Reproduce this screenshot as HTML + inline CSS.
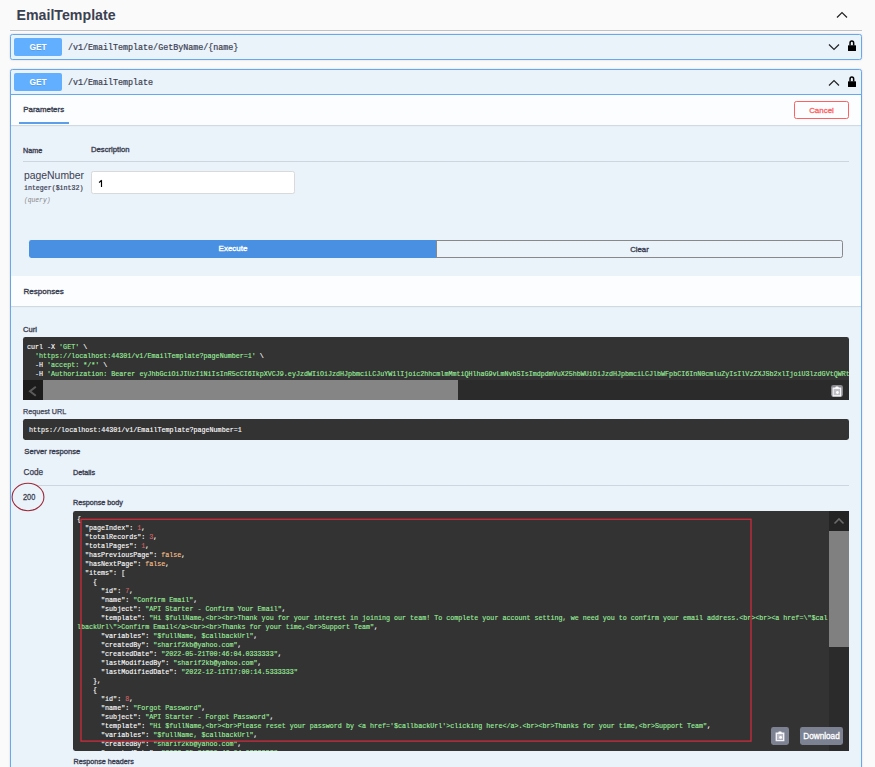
<!DOCTYPE html>
<html><head><meta charset="utf-8">
<style>
*{margin:0;padding:0;box-sizing:border-box}
html,body{width:875px;height:767px;overflow:hidden;background:#fafafa}
body{position:relative;font-family:"Liberation Sans",sans-serif;color:#3b4151}
.a{position:absolute;white-space:pre}
.sans{font-family:"Liberation Sans",sans-serif}
.mono{font-family:"Liberation Mono",monospace}
.opb{position:absolute;left:10px;width:852px;border:1px solid #66a8ee;border-radius:2.4px;background:rgba(97,175,254,.1);box-shadow:0 0 2px rgba(0,0,0,.19)}
.badge{position:absolute;left:14px;width:48px;height:18px;background:#61affe;border-radius:2px;color:#fff;font:bold 8.4px/18px "Liberation Sans",sans-serif;text-align:center;text-shadow:0 1px 0 rgba(0,0,0,.1)}
.path{font:8.35px/10px "Liberation Mono",monospace;color:#3b4151;-webkit-text-stroke:0.2px #3b4151;transform:scaleY(1.1);transform-origin:0 0}
.dark{position:absolute;background:#333;border-radius:2.4px;overflow:hidden}
.code{font:6.7px/9px "Liberation Mono",monospace;color:#fff;white-space:pre;-webkit-text-stroke:0.12px currentColor}
.s{color:#9cf09c}.n{color:#d36363}.l{color:#fcc28c}
.lbl{font:7.2px/9px "Liberation Sans",sans-serif;color:#3b4151;-webkit-text-stroke:0.35px #3b4151}
</style></head><body>

<!-- heading -->
<div class="a" style="left:16.5px;top:5px;font:bold 14.2px/20px 'Liberation Sans',sans-serif;color:#3b4151">EmailTemplate</div>
<div class="a" style="left:10px;top:30px;width:852px;height:1px;background:rgba(59,65,81,.3)"></div>
<svg class="a" style="left:836px;top:10px" width="12" height="9" viewBox="0 0 12 9"><path d="M1 7.5 L6 2.5 L11 7.5" fill="none" stroke="#222" stroke-width="1.2"/></svg>

<!-- opblock 1 -->
<div class="opb" style="top:34px;height:26px"></div>
<div class="badge" style="top:38px">GET</div>
<div class="a path" style="left:68px;top:42.3px">/v1/EmailTemplate/GetByName/{name}</div>
<svg class="a" style="left:828px;top:42px" width="12" height="10" viewBox="0 0 12 10"><path d="M1 2.5 L6 7.5 L11 2.5" fill="none" stroke="#222" stroke-width="1.2"/></svg>
<svg class="a" style="left:847px;top:40px" width="10" height="12" viewBox="0 0 10 12"><path d="M3.05 5.6 V2.9 A1.8 1.8 0 0 1 6.65 2.9 V5.6" fill="none" stroke="#000" stroke-width="1.5"/><rect x="1" y="5.3" width="8" height="5.6" rx="0.5" fill="#000"/></svg>

<!-- opblock 2 -->
<div class="opb" style="top:69px;height:720px"></div>
<div class="a" style="left:11px;top:94px;width:850px;height:1px;background:#66a8ee"></div>
<div class="badge" style="top:73px">GET</div>
<div class="a path" style="left:68px;top:77.3px">/v1/EmailTemplate</div>
<svg class="a" style="left:828px;top:77.6px" width="12" height="10" viewBox="0 0 12 10"><path d="M1 7.5 L6 2.5 L11 7.5" fill="none" stroke="#222" stroke-width="1.2"/></svg>
<svg class="a" style="left:847px;top:75.6px" width="10" height="12" viewBox="0 0 10 12"><path d="M3.05 5.6 V2.9 A1.8 1.8 0 0 1 6.65 2.9 V5.6" fill="none" stroke="#000" stroke-width="1.5"/><rect x="1" y="5.3" width="8" height="5.6" rx="0.5" fill="#000"/></svg>

<!-- tab header -->
<div class="a" style="left:11px;top:95px;width:850px;height:30px;background:rgba(255,255,255,.8);box-shadow:0 1px 1px rgba(0,0,0,.1)"></div>
<div class="a" style="left:23.3px;top:105.4px;font:7.9px/10px 'Liberation Sans',sans-serif;-webkit-text-stroke:0.35px #3b4151">Parameters</div>
<div class="a" style="left:19px;top:122px;width:50px;height:2px;background:#5c9fe8"></div>
<div class="a" style="left:794px;top:101px;width:55px;height:18px;border:1.2px solid #ff6060;border-radius:2.4px;color:#ff6060;font:7.95px/17.4px 'Liberation Sans',sans-serif;-webkit-text-stroke:0.3px #ff6060;text-align:center">Cancel</div>

<!-- params table -->
<div class="a lbl" style="left:23px;top:145.5px">Name</div>
<div class="a lbl" style="left:91px;top:145.3px;font-size:7.7px">Description</div>
<div class="a" style="left:23px;top:161px;width:826px;height:1px;background:rgba(59,65,81,.16)"></div>
<div class="a" style="left:24px;top:169.5px;font:10.4px/12px 'Liberation Sans',sans-serif">pageNumber</div>
<div class="a mono" style="left:24px;top:183.5px;font:6.6px/9px 'Liberation Mono',monospace;-webkit-text-stroke:0.2px #3b4151">integer($int32)</div>
<div class="a mono" style="left:24px;top:196px;font:italic 6.3px/9px 'Liberation Mono',monospace;color:#888">(query)</div>
<div class="a" style="left:91px;top:171px;width:204px;height:23px;background:#fff;border:1px solid #d9d9d9;border-radius:2.4px"></div>
<svg class="a" style="left:97px;top:178px" width="8" height="11" viewBox="0 0 8 11"><path d="M4.5 9 V2.3 M4.6 2.2 C3.8 3.3 3 4 2 4.5" fill="none" stroke="#000" stroke-width="1.15"/></svg>

<!-- execute / clear -->
<div class="a" style="left:29px;top:240px;width:408px;height:18px;background:#4990e2;border-radius:2.4px 0 0 2.4px;color:#fff;font:8px/18.4px 'Liberation Sans',sans-serif;-webkit-text-stroke:0.35px #fff;text-align:center">Execute</div>
<div class="a" style="left:436px;top:240px;width:407px;height:18px;border:1.2px solid #888;border-radius:0 2.4px 2.4px 0;color:#3b4151;font:7.75px/17.4px 'Liberation Sans',sans-serif;-webkit-text-stroke:0.35px #3b4151;text-align:center">Clear</div>

<!-- responses header -->
<div class="a" style="left:11px;top:276px;width:850px;height:30px;background:rgba(255,255,255,.8);box-shadow:0 1px 1px rgba(0,0,0,.1)"></div>
<div class="a" style="left:23.5px;top:286.7px;font:8.05px/10px 'Liberation Sans',sans-serif;-webkit-text-stroke:0.35px #3b4151">Responses</div>

<!-- curl -->
<div class="a lbl" style="left:23px;top:325px;font-size:7.6px">Curl</div>
<div class="dark" style="left:23px;top:337px;width:826px;height:63px;border-radius:2.4px 2.4px 0 0">
<div class="a code" style="left:4px;top:5.6px"><span>curl -X </span><span class="s">'GET'</span> \
  <span class="s">'https://localhost:44301/v1/EmailTemplate?pageNumber=1'</span> \
  -H <span class="s">'accept: */*'</span> \
  -H <span class="s">'Authorization: Bearer eyJhbGciOiJIUzI1NiIsInR5cCI6IkpXVCJ9.eyJzdWIiOiJzdHJpbmciLCJuYW1lIjoic2hhcmlmMmtiQHlhaG9vLmNvbSIsImdpdmVuX25hbWUiOiJzdHJpbmciLCJlbWFpbCI6InN0cmluZyIsIlVzZXJSb2xlIjoiU3lzdGVtQWRtaW4iLCJqdGkiOiI3YjQ1</span></div>
<div class="a" style="left:0;top:43px;width:826px;height:20px;background:#2b2b2b"></div>
<div class="a" style="left:0;top:43px;width:20px;height:20px;background:#1c1c1c"></div>
<svg class="a" style="left:5px;top:48px" width="12" height="14" viewBox="0 0 12 14"><path d="M7.8 1.8 L2 6.3 L7.8 10.8" fill="none" stroke="#5a5a5a" stroke-width="2"/></svg>
<div class="a" style="left:20px;top:43px;width:415px;height:20px;background:#858585"></div>
<div class="a" style="left:808px;top:47.7px;width:12px;height:12.2px;background:#8a8a8f;border-radius:2.4px"></div>
<svg class="a" style="left:808px;top:47.7px" width="12" height="12" viewBox="0 0 12 12"><path d="M2.2 3.3 H9.6 V10.8 H2.2 Z" fill="none" stroke="#f4f4f8" stroke-width="1.4"/><rect x="4.4" y="1.6" width="3.2" height="2" rx="0.6" fill="#fff"/><rect x="2.9" y="4" width="6" height="6.1" fill="#c0c0c6"/><circle cx="6.4" cy="7.5" r="1.4" fill="#fff"/></svg>
</div>

<!-- request url -->
<div class="a" style="left:23px;top:407px;font:7.2px/9px 'Liberation Sans',sans-serif;-webkit-text-stroke:0.25px #3b4151">Request URL</div>
<div class="dark" style="left:23px;top:419px;width:826px;height:21px">
<div class="a code" style="left:6px;top:6.6px">https://localhost:44301/v1/EmailTemplate?pageNumber=1</div>
</div>
<div class="a lbl" style="left:24.3px;top:447px;font-size:7.65px">Server response</div>

<!-- code/details -->
<div class="a" style="left:23.5px;top:468.2px;font:8.2px/10px 'Liberation Sans',sans-serif;-webkit-text-stroke:0.25px #3b4151">Code</div>
<div class="a lbl" style="left:73px;top:468px">Details</div>
<div class="a" style="left:23px;top:485px;width:826px;height:1px;background:rgba(59,65,81,.16)"></div>
<svg class="a" style="left:10px;top:481px" width="38" height="32" viewBox="0 0 38 32"><ellipse cx="18" cy="16" rx="15.9" ry="13.7" fill="#ebf3fa" stroke="#9e2a3a" stroke-width="1.1"/></svg>
<div class="a" style="left:23px;top:491.6px;font:7.4px/10px 'Liberation Sans',sans-serif;-webkit-text-stroke:0.25px #3b4151;transform:scaleY(1.12);transform-origin:0 0">200</div>
<div class="a lbl" style="left:73px;top:498px">Response body</div>

<!-- response body -->
<div class="dark" style="left:73px;top:511px;width:776px;height:240px;border-radius:2.4px 0 0 2.4px">
<div class="a code" style="left:4px;top:3.5px">{
  "pageIndex": <span class="n">1</span>,
  "totalRecords": <span class="n">3</span>,
  "totalPages": <span class="n">1</span>,
  "hasPreviousPage": <span class="l">false</span>,
  "hasNextPage": <span class="l">false</span>,
  "items": [
    {
      "id": <span class="n">7</span>,
      "name": <span class="s">"Confirm Email"</span>,
      "subject": <span class="s">"API Starter - Confirm Your Email"</span>,
      "template": <span class="s">"Hi $fullName,&lt;br&gt;&lt;br&gt;Thank you for your interest in joining our team! To complete your account setting, we need you to confirm your email address.&lt;br&gt;&lt;br&gt;&lt;a href=\"$cal
lbackUrl\"&gt;Confirm Email&lt;/a&gt;&lt;br&gt;&lt;br&gt;Thanks for your time,&lt;br&gt;Support Team"</span>,
      "variables": <span class="s">"$fullName, $callbackUrl"</span>,
      "createdBy": <span class="s">"sharif2kb@yahoo.com"</span>,
      "createdDate": <span class="s">"2022-05-21T00:46:04.0333333"</span>,
      "lastModifiedBy": <span class="s">"sharif2kb@yahoo.com"</span>,
      "lastModifiedDate": <span class="s">"2022-12-11T17:00:14.5333333"</span>
    },
    {
      "id": <span class="n">8</span>,
      "name": <span class="s">"Forgot Password"</span>,
      "subject": <span class="s">"API Starter - Forgot Password"</span>,
      "template": <span class="s">"Hi $fullName,&lt;br&gt;&lt;br&gt;Please reset your password by &lt;a href='$callbackUrl'&gt;clicking here&lt;/a&gt;.&lt;br&gt;&lt;br&gt;Thanks for your time,&lt;br&gt;Support Team"</span>,
      "variables": <span class="s">"$fullName, $callbackUrl"</span>,
      "createdBy": <span class="s">"sharif2kb@yahoo.com"</span>,
      "createdDate": <span class="s">"2022-05-21T00:46:04.0333333"</span>,</div>
<div class="a" style="left:756px;top:0;width:20px;height:240px;background:#2b2b2b"></div>
<div class="a" style="left:756px;top:0;width:20px;height:20px;background:#242424"></div>
<svg class="a" style="left:760px;top:5px" width="12" height="10" viewBox="0 0 12 10"><path d="M1.5 7.5 L6 3 L10.5 7.5" fill="none" stroke="#6a6a6a" stroke-width="1.6"/></svg>
<div class="a" style="left:756px;top:20px;width:20px;height:116px;background:#808080"></div>
<div class="a" style="left:698px;top:216px;width:18px;height:18px;background:#7d8293;border-radius:2.4px"></div>
<svg class="a" style="left:698px;top:216px" width="18" height="18" viewBox="0 0 18 18"><path d="M5.3 6.2 H12.7 V13.6 H5.3 Z" fill="none" stroke="#f4f4f8" stroke-width="1.4"/><rect x="7.4" y="4.5" width="3.2" height="2" rx="0.6" fill="#fff"/><rect x="6.1" y="7" width="5.8" height="5.8" fill="#b8bbc6"/><circle cx="9.6" cy="10.4" r="1.4" fill="#fff"/></svg>
<div class="a" style="left:727px;top:216px;width:43px;height:18px;background:#7d8293;border-radius:2.4px;color:#fff;font:8.2px/20.2px 'Liberation Sans',sans-serif;-webkit-text-stroke:0.3px #fff;text-align:center">Download</div>
</div>
<svg class="a" style="left:79px;top:518px" width="674" height="224" viewBox="0 0 674 224"><rect x="2" y="1.3" width="670" height="221.8" fill="none" stroke="#c42c3c" stroke-width="1.4"/></svg>

<div class="a lbl" style="left:73.5px;top:757px">Response headers</div>
</body></html>
